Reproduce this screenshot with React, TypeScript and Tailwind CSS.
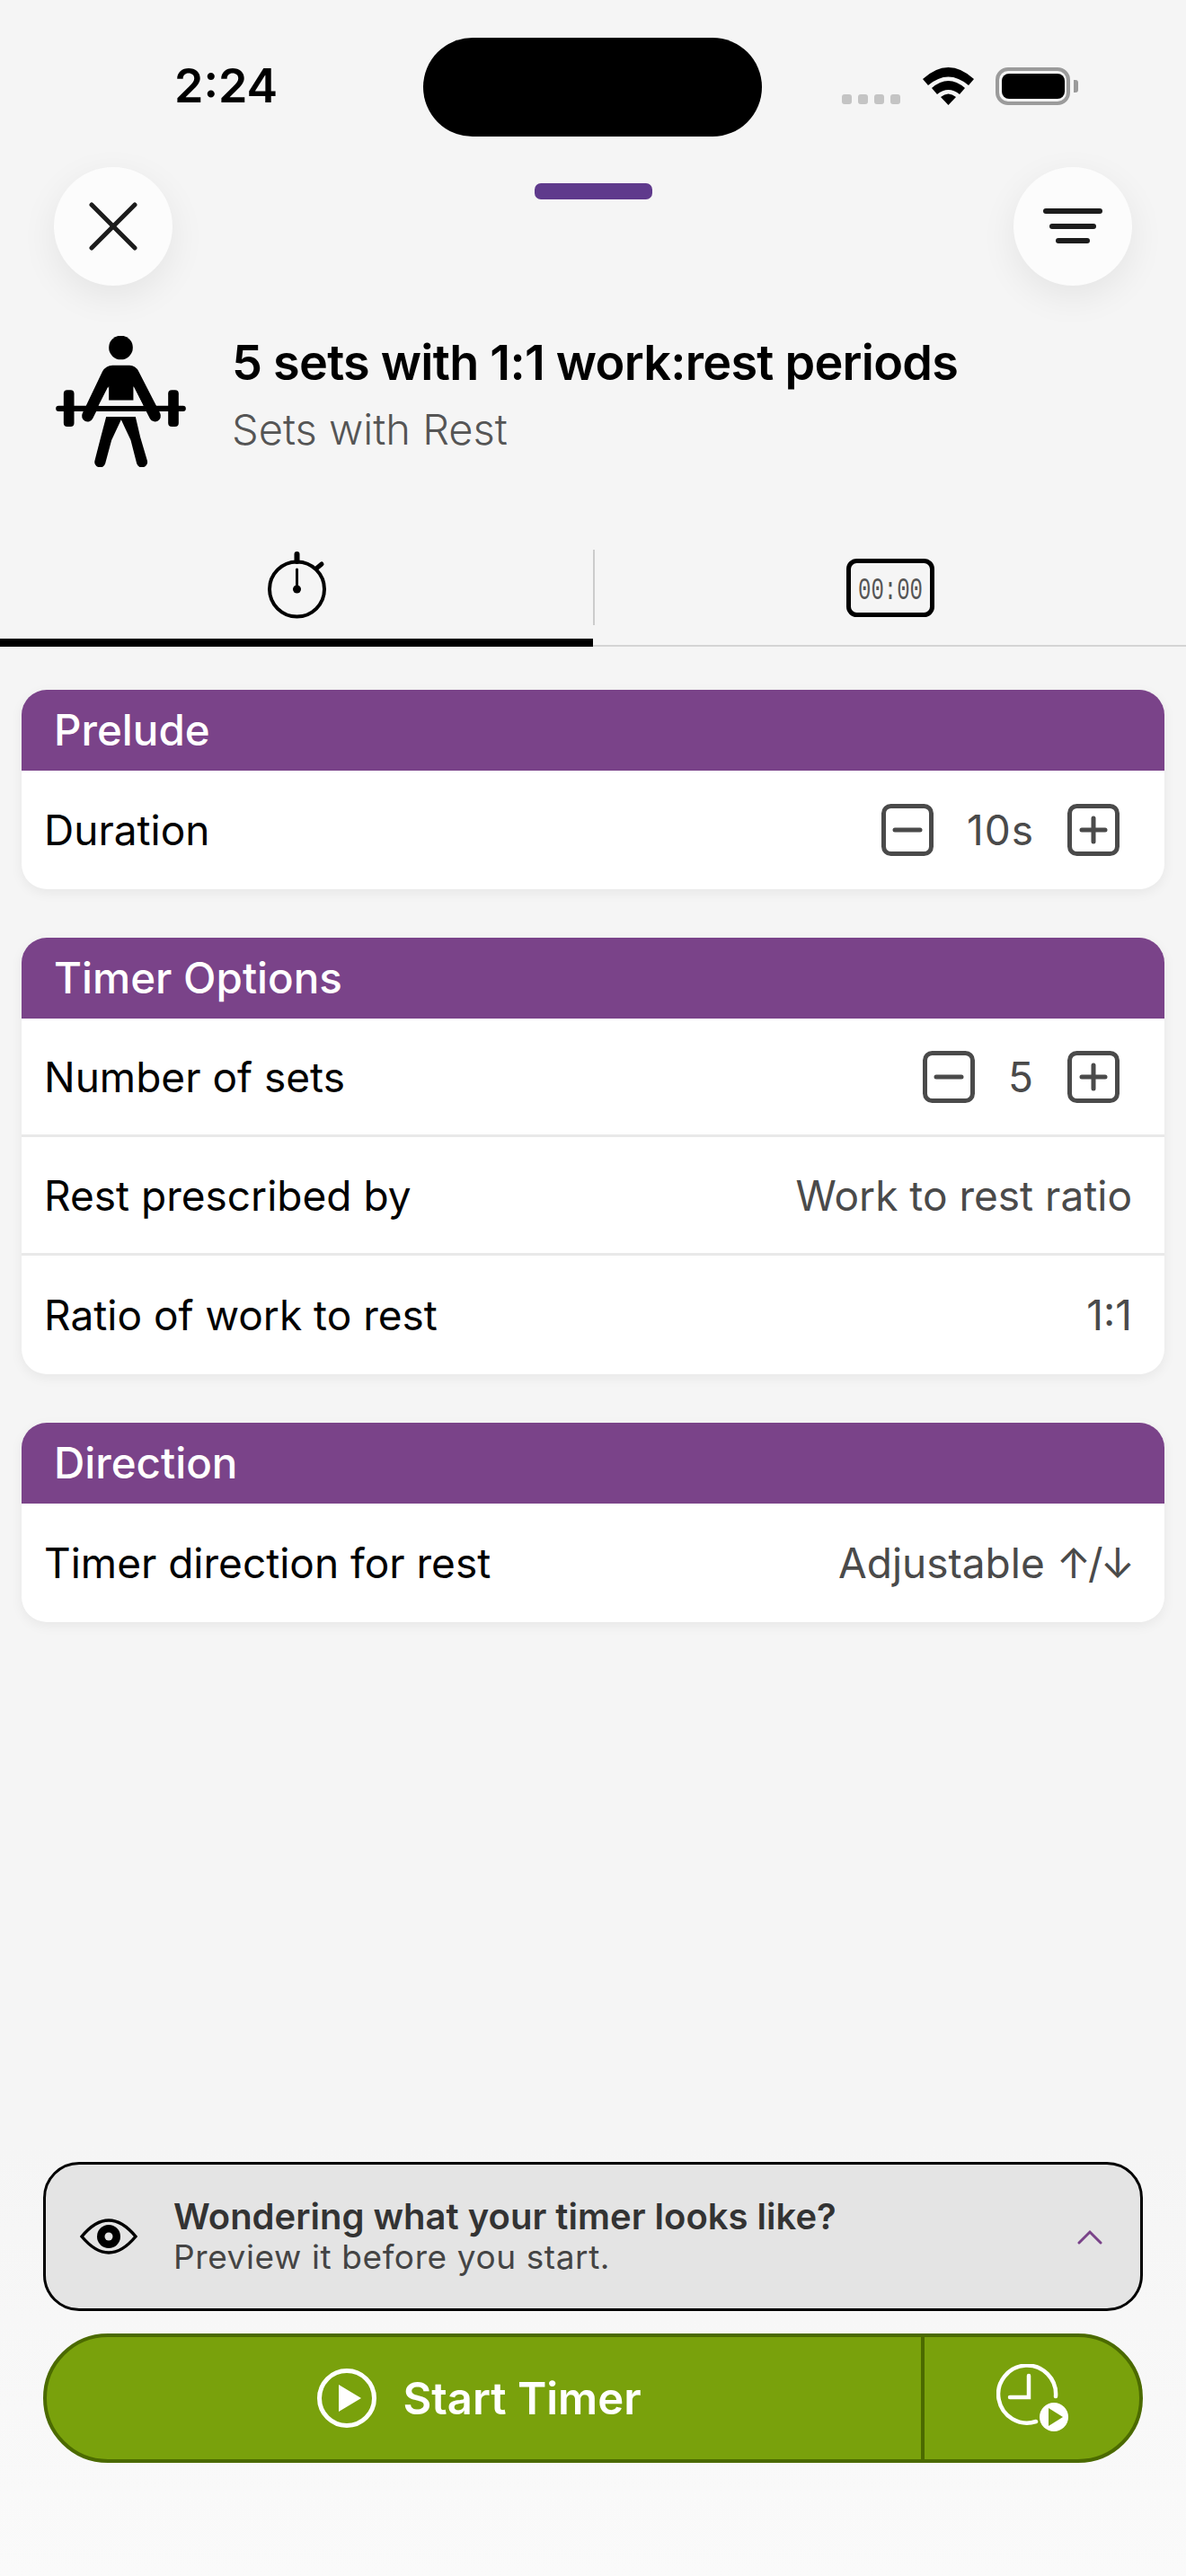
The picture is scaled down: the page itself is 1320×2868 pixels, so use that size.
import React from "react";

function Weightlifter() {
  return (
    <svg width="145" height="146" viewBox="96 72 434 438" fill="#000">
      <circle cx="313" cy="111" r="40" />
      <path d="M285 170 H342 Q362 170 372 190 L444 330 A19 19 0 0 1 410 348 L355 240 V287 H273 V240 L219 348 A19 19 0 0 1 185 330 L252 190 Q264 170 285 170 Z" />
      <rect x="96" y="305" width="434" height="19" rx="9.5" />
      <rect x="122" y="253" width="35" height="122" rx="12" />
      <rect x="471" y="253" width="35" height="122" rx="12" />
      <path d="M264 342 H362 L378 410 L401 488 A18 18 0 0 1 366 498 L346 420 L314 352 L282 420 L261 498 A18 18 0 0 1 226 488 L246 410 Z" />
      <path d="M238 305 L270 242 V287 H356 V242 L388 305 Z" fill="#f5f5f5" />
    </svg>
  );
}

function Stopwatch() {
  return (
    <svg width="72" height="76" viewBox="293 616 72 76" fill="none" stroke="#000">
      <circle cx="329.5" cy="658" r="30.5" strokeWidth="4" />
      <path d="M329.5 619 V627" strokeWidth="6" strokeLinecap="round" />
      <path d="M351 635 L357 630" strokeWidth="5" strokeLinecap="round" />
      <path d="M329.5 636 V656" strokeWidth="3" strokeLinecap="round" />
      <circle cx="329.5" cy="658" r="4.5" fill="#000" stroke="none" />
    </svg>
  );
}

function DigitalTimer() {
  return (
    <svg width="98" height="65" viewBox="0 0 98 65" fill="none">
      <rect x="2.5" y="2.5" width="93" height="60" rx="9" stroke="#000" strokeWidth="5" />
      <text
        x="49"
        y="29"
        textAnchor="middle"
        fill="#555"
        fontFamily="Liberation Mono, monospace"
        fontSize="24"
        transform="translate(0 1.5) scale(1 1.5)"
        textLength="72"
        lengthAdjust="spacingAndGlyphs"
      >
        00:00
      </text>
    </svg>
  );
}

function StepBox({ plus }: { plus?: boolean }) {
  return (
    <svg width="58" height="58" viewBox="0 0 58 58" fill="none" stroke="#4a4a4a" strokeWidth="5" strokeLinecap="round">
      <rect x="2.5" y="2.5" width="53" height="53" rx="8" />
      {plus ? (
        <>
          <path d="M16 29 H42" />
          <path d="M29 16 V42" />
        </>
      ) : (
        <path d="M15 29 H43" />
      )}
    </svg>
  );
}

function Stepper({ value }: { value: string }) {
  return (
    <div className="flex items-center gap-[37px] pr-[12px]">
      <StepBox />
      <span className="text-[46px] leading-none tracking-[1px] text-[#4a4a4a]">{value}</span>
      <StepBox plus />
    </div>
  );
}

function Row({ label, children, divider }: { label: string; children: React.ReactNode; divider?: boolean }) {
  return (
    <div
      className={
        "flex h-[132px] items-center justify-between pl-[25px] pr-[38px] " +
        (divider ? "border-b-[3px] border-[#e9e9e9]" : "")
      }
    >
      <span className="text-[46px] leading-none text-black">{label}</span>
      {children}
    </div>
  );
}

function Value({ children }: { children: React.ReactNode }) {
  return <span className="-mr-[2px] text-[46px] leading-none text-[#4a4a4a]">{children}</span>;
}

function Card({ title, children }: { title: string; children: React.ReactNode }) {
  return (
    <section className="rounded-[28px] bg-white shadow-[0_4px_14px_rgba(0,0,0,0.06)]">
      <h2 className="flex h-[90px] items-center rounded-t-[28px] bg-[#7a4389] pl-[36px] text-[47.5px] font-medium leading-none text-white">
        {title}
      </h2>
      {children}
    </section>
  );
}

export default function App() {
  return (
    <div className="flex h-[2868px] w-[1320px] flex-col overflow-hidden bg-[#f5f5f5] [font-family:Inter,sans-serif]">
      {/* status bar */}
      <div className="flex h-[186px] items-start pt-[42px]">
        <div className="w-[471px] pl-[194px] pt-[28px] text-[52px] font-semibold leading-none text-black">2:24</div>
        <div className="h-[110px] w-[377px] rounded-[55px] bg-black" />
        <div className="flex items-end pl-[89px] pt-[33px]">
          <div className="mb-[1px] flex gap-[7px]">
            <span className="h-[11px] w-[11px] rounded-[3px] bg-[#c4c4c4]" />
            <span className="h-[11px] w-[11px] rounded-[3px] bg-[#c4c4c4]" />
            <span className="h-[11px] w-[11px] rounded-[3px] bg-[#c4c4c4]" />
            <span className="h-[11px] w-[11px] rounded-[3px] bg-[#c4c4c4]" />
          </div>
          <svg className="ml-[25px]" width="57" height="42" viewBox="0 0 57 42" fill="#000">
            <path d="M0 13 Q28.5 -13 57 13 L51 20 Q28.5 1 6 20 Z" />
            <path d="M10 23 Q28.5 7 47 23 L41 30 Q28.5 20 16 30 Z" />
            <path d="M20 33 Q28.5 26 37 33 L28.5 42 Z" />
          </svg>
          <div className="ml-[24px] flex items-center">
            <div className="flex h-[42px] w-[83px] items-center justify-center rounded-[14px] border-[4px] border-[#9b9b9b]">
              <div className="h-[28px] w-[70px] rounded-[8px] bg-black" />
            </div>
            <div className="ml-[4px] h-[14px] w-[5px] rounded-r-[3px] bg-[#9b9b9b]" />
          </div>
        </div>
      </div>

      {/* toolbar */}
      <div className="flex h-[132px] items-start justify-between px-[60px]">
        <button className="flex h-[132px] w-[132px] items-center justify-center rounded-full bg-[#fcfcfc] shadow-[0_12px_40px_rgba(0,0,0,0.07)]">
          <svg width="56" height="56" viewBox="0 0 56 56" stroke="#1c1c1c" strokeWidth="5" strokeLinecap="round">
            <path d="M4 4 L52 52" />
            <path d="M52 4 L4 52" />
          </svg>
        </button>
        <div className="mt-[18px] h-[18px] w-[131px] rounded-[7px] bg-[#5f3a8c]" />
        <button className="flex h-[132px] w-[132px] items-center justify-center rounded-full bg-[#fcfcfc] shadow-[0_12px_40px_rgba(0,0,0,0.07)]">
          <svg width="66" height="40" viewBox="0 0 66 40" stroke="#1c1c1c" strokeWidth="6" strokeLinecap="round">
            <path d="M3 3 H63" />
            <path d="M10 20 H56" />
            <path d="M17 36 H49" />
          </svg>
        </button>
      </div>

      {/* title */}
      <div className="mt-[56px] flex h-[146px] items-start pl-[62px]">
        <Weightlifter />
        <div className="ml-[51px]">
          <h1 className="text-[54px] font-semibold leading-[60px] tracking-[-0.75px] text-black">
            5 sets with 1:1 work:rest periods
          </h1>
          <p className="mt-[18px] text-[47px] font-light leading-[52px] text-[#555]">Sets with Rest</p>
        </div>
      </div>

      {/* tabs */}
      <div className="mt-[92px] flex h-[108px] border-b-2 border-[#d4d4d4]">
        <div className="-mb-[2px] flex w-[660px] items-start justify-center border-b-[9px] border-black pt-[2px]">
          <Stopwatch />
        </div>
        <div className="mb-[22px] w-[2px] bg-[#cccccc]" />
        <div className="flex flex-1 items-start justify-center pt-[10px]">
          <DigitalTimer />
        </div>
      </div>

      {/* cards */}
      <main className="mt-[48px] flex flex-col gap-[54px] px-[24px]">
        <Card title="Prelude">
          <Row label="Duration">
            <Stepper value="10s" />
          </Row>
        </Card>
        <Card title="Timer Options">
          <Row label="Number of sets" divider>
            <Stepper value="5" />
          </Row>
          <Row label="Rest prescribed by" divider>
            <Value>Work to rest ratio</Value>
          </Row>
          <Row label="Ratio of work to rest">
            <Value>1:1</Value>
          </Row>
        </Card>
        <Card title="Direction">
          <Row label="Timer direction for rest">
            <Value>
              Adjustable <span className="tracking-[-3px]">↑/↓</span>
            </Value>
          </Row>
        </Card>
      </main>

      {/* footer */}
      <footer className="mt-auto flex flex-col gap-[25px] bg-gradient-to-b from-[#f5f5f5] to-[#fafafa] px-[48px] pb-[126px] pt-[20px]">
        <div className="flex h-[166px] items-center rounded-[40px] border-[3px] border-black bg-[#e4e4e4] pl-[38px] pr-[42px]">
          <svg width="64" height="40" viewBox="0 0 64 40" fill="none">
            <path d="M2 20 Q32 -16 62 20 Q32 56 2 20 Z" stroke="#000" strokeWidth="3.5" />
            <circle cx="32" cy="20" r="13" fill="#000" />
            <circle cx="32" cy="20" r="4.5" fill="#e4e4e4" />
          </svg>
          <div className="ml-[40px] flex-1 text-[#333]">
            <div className="text-[40px] font-semibold leading-[46px]">Wondering what your timer looks like?</div>
            <div className="text-[37px] font-normal leading-[44px] tracking-[0.6px] text-[#444]">
              Preview it before you start.
            </div>
          </div>
          <svg width="28" height="17" viewBox="0 0 28 17" fill="none" stroke="#7a4389" strokeWidth="3" strokeLinecap="round">
            <path d="M2 15 L14 3 L26 15" />
          </svg>
        </div>
        <div className="flex h-[144px] rounded-full border-[4px] border-[#4b6a00] bg-[#79a10c] text-white">
          <div className="flex flex-1 items-center justify-center gap-[29px] border-r-[4px] border-[#4b6a00] pr-[10px]">
            <svg width="66" height="66" viewBox="0 0 66 66" fill="none">
              <circle cx="33" cy="33" r="30.5" stroke="#fff" strokeWidth="5" />
              <path d="M24 18 L49 33 L24 48 Z" fill="#fff" />
            </svg>
            <span className="text-[49px] font-semibold leading-none">Start Timer</span>
          </div>
          <div className="flex w-[239px] items-center justify-center pl-[5px]">
            <svg width="84" height="76" viewBox="0 0 84 76" fill="none" stroke="#fff" strokeWidth="4.5" strokeLinecap="round">
              <path d="M66 36 A32 32 0 1 0 44 64" />
              <path d="M36 13 V37 H15" />
              <circle cx="64" cy="59" r="16" fill="#fff" stroke="none" />
              <path d="M58 49 L74 59 L58 69 Z" fill="#79a10c" stroke="none" />
            </svg>
          </div>
        </div>
      </footer>
    </div>
  );
}
